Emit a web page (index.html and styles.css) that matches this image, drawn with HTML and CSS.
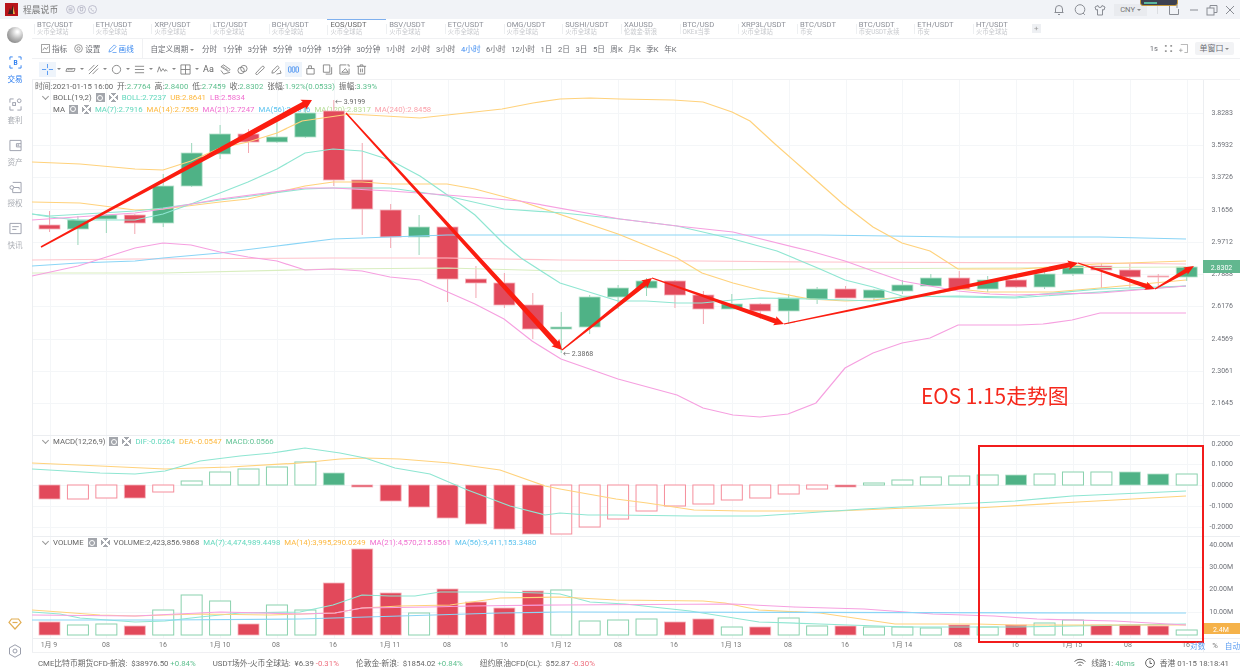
FILE: index.html
```html
<!DOCTYPE html>
<html lang="zh-CN">
<head>
  <meta charset="UTF-8">
  <title>程晨说币</title>
  <link rel="stylesheet" href="styles.css">
</head>
<body>
  <header class="titlebar">
    <div class="logo"><svg viewBox="0 0 13 13" width="13" height="13"><rect width="13" height="13" fill="#b8141a"/><path d="M3 11 5 5l1 3 2-6 1 9z" fill="#3a2320"/><path d="M8 3l2 8H8z" fill="#e8b04a"/></svg></div>
    <span class="app-name">程晨说币</span>
    <svg class="dot-icon" viewBox="0 0 9 9"><circle cx="4.5" cy="4.5" r="4"/><path d="M2.5 4.5h4M2.5 3h4M2.5 6h4"/></svg>
    <svg class="dot-icon" viewBox="0 0 9 9"><circle cx="4.5" cy="4.5" r="4"/><path d="M3 2.5h3L5.5 6h-2z"/></svg>
    <svg class="dot-icon" viewBox="0 0 9 9"><circle cx="4.5" cy="4.5" r="4"/><path d="M3 3c0 2 1 3 3 3"/></svg>
    <div class="window-tools">
      <svg class="win-icon" viewBox="0 0 12 12"><path d="M2.5 8.5V5a3.500 3.500 0 0 1 7 0v3.500zM1.500 8.500h9M5 10.500h2"/></svg>
      <svg class="win-icon search" viewBox="0 0 12 12"><circle cx="6" cy="5.500" r="4.800"/><path d="M9 9l1.800 1.800"/></svg>
      <svg class="win-icon shirt" viewBox="0 0 12 12"><path d="M4 1.500 1 3l1 3 1.500-.5V11h5V5.500L10 6l1-3-3-1.500a2 2 0 0 1-4 0z"/></svg>
      <div class="currency">CNY <i class="caret"></i></div>
      <i class="win-divider"></i>
      <svg class="win-icon" viewBox="0 0 12 12"><path d="M7 1.500H1.500v9h9V5"/><path d="M9 1v3"/></svg>
      <svg class="win-icon min" viewBox="0 0 12 12"><path d="M2 6h8"/></svg>
      <svg class="win-icon" viewBox="0 0 12 12"><rect x="1" y="4" width="7" height="7"/><path d="M4 4V1.500h7v7H8"/></svg>
      <svg class="win-icon" viewBox="0 0 12 12"><path d="M2 2l8 8M10 2l-8 8"/></svg>
    </div>
    <div class="thumb-popup"><i></i></div>
  </header>

  <div class="app">
    <nav class="sidebar">
      <div class="globe"></div>
      <a class="side-item active">
        <svg viewBox="0 0 14 14"><path d="M1 4V1h3M10 1h3v3M13 10v3h-3M4 13H1v-3"/><text x="7" y="10" class="side-b">B</text></svg>
        <span>交易</span>
      </a>
      <a class="side-item">
        <svg viewBox="0 0 14 14"><path d="M1 5V1h4M9 13h4V9M1 9v4h4"/><circle cx="11" cy="3" r="2"/><rect x="4" y="5" width="3" height="3"/></svg>
        <span>套利</span>
      </a>
      <a class="side-item">
        <svg viewBox="0 0 14 14"><path d="M1 1.500h12v11H1z"/><path d="M13 5H8v3.500h5"/><circle cx="10" cy="6.700" r=".6"/></svg>
        <span>资产</span>
      </a>
      <a class="side-item">
        <svg viewBox="0 0 14 14"><path d="M4 1.500h9v11H4V9"/><circle cx="3" cy="7" r="2"/><path d="M5 7h6v2"/></svg>
        <span>授权</span>
      </a>
      <a class="side-item">
        <svg viewBox="0 0 14 14"><path d="M1 1.500h12v11H1zM3.500 5h7M3.500 8h4.500"/></svg>
        <span>快讯</span>
      </a>
      <div class="side-bottom">
        <svg class="diamond" viewBox="0 0 14 14"><path d="M3.500 2h7L13 5.500 7 12 1 5.500z"/><path d="M4.500 5.500h5"/></svg>
        <svg class="hex" viewBox="0 0 14 14"><path d="M7 .8l5.500 3.100v6.200L7 13.200 1.500 10.100V3.900z"/><circle cx="7" cy="7" r="2"/></svg>
      </div>
    </nav>

    <main class="content">
      <div class="tabs">
        <div class="tab"><b>BTC/USDT</b><small>火币全球站</small></div>
        <div class="tab"><b>ETH/USDT</b><small>火币全球站</small></div>
        <div class="tab"><b>XRP/USDT</b><small>火币全球站</small></div>
        <div class="tab"><b>LTC/USDT</b><small>火币全球站</small></div>
        <div class="tab"><b>BCH/USDT</b><small>火币全球站</small></div>
        <div class="tab current"><b>EOS/USDT</b><small>火币全球站</small></div>
        <div class="tab"><b>BSV/USDT</b><small>火币全球站</small></div>
        <div class="tab"><b>ETC/USDT</b><small>火币全球站</small></div>
        <div class="tab"><b>OMG/USDT</b><small>火币全球站</small></div>
        <div class="tab"><b>SUSHI/USDT</b><small>火币全球站</small></div>
        <div class="tab"><b>XAUUSD</b><small>伦敦金-新浪</small></div>
        <div class="tab"><b>BTC/USD</b><small>OKEx当季</small></div>
        <div class="tab"><b>XRP3L/USDT</b><small>火币全球站</small></div>
        <div class="tab"><b>BTC/USDT</b><small>币安</small></div>
        <div class="tab"><b>BTC/USDT</b><small>币安USDT永续</small></div>
        <div class="tab"><b>ETH/USDT</b><small>币安</small></div>
        <div class="tab"><b>HT/USDT</b><small>火币全球站</small></div>
        <div class="tab-add">+</div>
      </div>

      <div class="periods">
        <span class="pbtn"><svg viewBox="0 0 10 10"><path d="M.5.500h9v9h-9zM2 7l2-3 2 2 2-3"/></svg>指标</span>
        <span class="pbtn"><svg viewBox="0 0 10 10"><circle cx="5" cy="5" r="4.300"/><circle cx="5" cy="5" r="1.800"/></svg>设置</span>
        <span class="pbtn on"><svg viewBox="0 0 10 10"><path d="M1 9l1-3 5-5 2 2-5 5zM5 9.500h4.500"/></svg>画线</span>
        <i class="pdivider"></i>
        <span class="custom">自定义周期 <i class="caret"></i></span>
        <span>分时</span><span>1分钟</span><span>3分钟</span><span>5分钟</span><span>10分钟</span><span>15分钟</span><span>30分钟</span>
        <span>1小时</span><span>2小时</span><span>3小时</span><span class="on">4小时</span><span>6小时</span><span>12小时</span>
        <span>1日</span><span>2日</span><span>3日</span><span>5日</span><span>周K</span><span>月K</span><span>季K</span><span>年K</span>
        <div class="period-right">
          <span>1s</span>
          <svg viewBox="0 0 10 10"><path d="M1 1h2v2H1zM7 1h2v2H7zM1 7h2v2H1zM7 7h2v2H7z" fill="#999" stroke="none"/></svg>
          <svg viewBox="0 0 10 10"><path d="M2 .5h7.500v9H6M0 7h4M2 5v4"/></svg>
          <span class="window-btn">单窗口 <i class="caret"></i></span>
        </div>
      </div>

      <div class="tools">
        <span class="tool sel"><svg viewBox="0 0 12 12"><path d="M6 0v4.500M6 7.500V12M0 6h4.500M7.500 6H12"/></svg></span><i class="caret tc"></i>
        <span class="tool"><svg viewBox="0 0 12 12"><path d="M1 8l1-3h9l-1 3zM3.500 5v1.500M5.500 5v1.500M7.500 5v1.500"/></svg></span><i class="caret tc"></i>
        <span class="tool"><svg viewBox="0 0 12 12"><path d="M1 7l6-6M5 11l6-6M1 11l10-10" /></svg></span><i class="caret tc"></i>
        <span class="tool"><svg viewBox="0 0 12 12"><circle cx="6" cy="6" r="4.500"/></svg></span><i class="caret tc"></i>
        <span class="tool"><svg viewBox="0 0 12 12"><path d="M1 2.500h10M1 6h10M1 9.500h10"/></svg></span><i class="caret tc"></i>
        <span class="tool"><svg viewBox="0 0 12 12"><path d="M.5 9l2-6 2 5 2-3 2 3 1-2 2 2"/></svg></span><i class="caret tc"></i>
        <span class="tool"><svg viewBox="0 0 12 12"><path d="M1 1h10v10H1zM6 1v10M1 6h10"/></svg></span><i class="caret tc"></i>
        <span class="tool aa">Aa</span>
        <span class="tool"><svg viewBox="0 0 12 12"><path d="M1 3l3-2 7 5-2 2zM1 7l3 4 7-2M3 3l2 1M6 5l2 1"/></svg></span>
        <span class="tool"><svg viewBox="0 0 12 12"><circle cx="4.500" cy="7" r="3.500"/><circle cx="7.500" cy="5" r="3.500"/></svg></span>
        <span class="tool"><svg viewBox="0 0 12 12"><path d="M2 10l7-7.500a1.500 1.500 0 0 1 2 2L4 11a1 1 0 0 1-2-1z"/></svg></span>
        <span class="tool"><svg viewBox="0 0 12 12"><path d="M1 10l.5-2.500L7 2l2 2-5.500 5.500zM6 11l5-1-1-3"/></svg></span>
        <span class="tool sel blue"><svg viewBox="0 0 12 12"><rect x=".5" y="3" width="2.800" height="6" rx="1"/><rect x="4.600" y="3" width="2.800" height="6" rx="1"/><rect x="8.700" y="3" width="2.800" height="6" rx="1"/></svg></span>
        <span class="tool"><svg viewBox="0 0 12 12"><path d="M2 5h8v6H2zM4 5V2h3v3"/></svg></span>
        <span class="tool"><svg viewBox="0 0 12 12"><path d="M1.500 1h7v8h-7zM10.500 3.500V11H4"/></svg></span>
        <span class="tool"><svg viewBox="0 0 12 12"><path d="M8 1H1v10h10V5M5 7l2-2 3 4H3zM9 1h2v2"/></svg></span>
        <span class="tool"><svg viewBox="0 0 12 12"><path d="M1 2.500h10M4.500 2.500V1h3v1.500M2.500 2.500V11h7V2.500M5 5v4M7 5v4"/></svg></span>
      </div>

      <div class="chart">
        <svg class="canvas" viewBox="32 79 1208 572" width="1208" height="572"><g id="grid"></g></svg>
        <section class="panel panel-main">
          <div class="info-row">
            时间:2021-01-15 16:00 &nbsp;开:<em class="up">2.7764</em> &nbsp;高:<em class="up">2.8400</em> &nbsp;低:<em class="up">2.7459</em> &nbsp;收:<em class="up">2.8302</em> &nbsp;张幅:<em class="up">1.92%(0.0533)</em> &nbsp;振幅:<em class="up">3.39%</em>
          </div>
          <div class="legend">
            <i class="chev"></i><span class="name">BOLL(19,2)</span><i class="mini gear"></i><i class="mini close"></i>
            <span class="c-teal">BOLL:2.7237</span><span class="c-orange">UB:2.8641</span><span class="c-pink">LB:2.5834</span>
          </div>
          <div class="legend">
            <i class="chev hide"></i><span class="name">MA</span><i class="mini gear"></i><i class="mini close"></i>
            <span class="c-teal">MA(7):2.7916</span><span class="c-orange">MA(14):2.7559</span><span class="c-pink">MA(21):2.7247</span><span class="c-blue">MA(56):2.9816</span><span class="c-lime">MA(120):2.8317</span><span class="c-rose">MA(240):2.8458</span>
          </div>
        </section>
        <section class="panel panel-macd">
          <div class="legend">
            <i class="chev"></i><span class="name">MACD(12,26,9)</span><i class="mini gear"></i><i class="mini close"></i>
            <span class="c-teal">DIF:-0.0264</span><span class="c-orange">DEA:-0.0547</span><span class="c-green">MACD:0.0566</span>
          </div>
        </section>
        <section class="panel panel-vol">
          <div class="legend">
            <i class="chev"></i><span class="name">VOLUME</span><i class="mini gear"></i><i class="mini close"></i>
            <span class="name">VOLUME:2,423,856.9868</span><span class="c-teal">MA(7):4,474,989.4498</span><span class="c-orange">MA(14):3,995,290.0249</span><span class="c-pink">MA(21):4,570,215.8561</span><span class="c-blue">MA(56):9,411,153.3480</span>
          </div>
        </section>
        <div class="axis-row">
          <span>对数</span><span class="pct">%</span><span>自动</span>
        </div>

        <svg class="canvas" viewBox="32 79 1208 572" width="1208" height="572">
          <g id="series"></g>
          <g class="price-axis">
            <text x="1233" y="114">3.8283</text><text x="1233" y="146">3.5932</text><text x="1233" y="178">3.3726</text>
            <text x="1233" y="211">3.1656</text><text x="1233" y="243">2.9712</text><text x="1233" y="275">2.7888</text>
            <text x="1233" y="307">2.6176</text><text x="1233" y="340">2.4569</text><text x="1233" y="372">2.3061</text>
            <text x="1233" y="404">2.1645</text>
            <text x="1233" y="445">0.2000</text><text x="1233" y="465">0.1000</text><text x="1233" y="486">0.0000</text>
            <text x="1233" y="507">-0.1000</text><text x="1233" y="528">-0.2000</text>
            <text x="1233" y="546">40.00M</text><text x="1233" y="568">30.00M</text><text x="1233" y="590">20.00M</text><text x="1233" y="613">10.00M</text>
          </g>
          <g class="time-axis">
            <text x="49" y="646">1月 9</text><text x="106" y="646">08</text><text x="163" y="646">16</text>
            <text x="220" y="646">1月 10</text><text x="276" y="646">08</text><text x="333" y="646">16</text>
            <text x="390" y="646">1月 11</text><text x="447" y="646">08</text><text x="504" y="646">16</text>
            <text x="561" y="646">1月 12</text><text x="618" y="646">08</text><text x="674" y="646">16</text>
            <text x="731" y="646">1月 13</text><text x="788" y="646">08</text><text x="845" y="646">16</text>
            <text x="902" y="646">1月 14</text><text x="958" y="646">08</text><text x="1015" y="646">16</text>
            <text x="1072" y="646">1月 15</text><text x="1128" y="646">08</text><text x="1186" y="646">16</text>
          </g>
          <text class="mark" x="335" y="102.500">← 3.9199</text>
          <text class="mark" x="563" y="355">← 2.3868</text>
          <rect class="tag-green" x="1203" y="259" width="37" height="13"/>
          <text class="tag-text" x="1221.500" y="268.500">2.8302</text>
          <rect class="tag-orange" x="1203" y="622" width="37" height="11"/>
          <text class="tag-text" x="1221" y="630.500">2.4M</text>
          <g id="arrows"></g>
          <text class="note" x="921" y="403">EOS 1.15走势图</text>
          <rect class="red-box" x="979" y="445" width="224" height="196"/>
        </svg>
      </div>

      <footer class="status">
        <span>CME比特币期货CFD-新浪: &nbsp;$38976.50 <em class="up">+0.84%</em></span>
        <span>USDT场外-火币全球站: &nbsp;¥6.39 <em class="down">-0.31%</em></span>
        <span>伦敦金-新浪: &nbsp;$1854.02 <em class="up">+0.84%</em></span>
        <span>纽约原油CFD(CL): &nbsp;$52.87 <em class="down">-0.30%</em></span>
        <div class="status-right">
          <svg viewBox="0 0 12 10"><path d="M.5 3.500a8 8 0 0 1 11 0M2.500 5.500a5 5 0 0 1 7 0M4.500 7.500a2.200 2.200 0 0 1 3 0"/></svg>
          <span>线路1: <em class="up">40ms</em></span>
          <svg class="clock" viewBox="0 0 10 10"><circle cx="5" cy="5" r="4.400"/><path d="M5 2.500V5.500h2"/></svg>
          <span>香港 01-15 18:18:41</span>
        </div>
      </footer>
    </main>
  </div>

  <script src="chart.js"></script>
</body>
</html>
```

FILE: styles.css
```css
/* General */
* {
  box-sizing: border-box;
}

body {
  margin: 0;
  width: 1240px;
  height: 671px;
  overflow: hidden;
  background: #fff;
  font-family: Roboto, "Noto Sans CJK SC", sans-serif;
  font-size: 7.6px;
  color: #666;
  filter: blur(0.4px);
}

em {
  font-style: normal;
}

.up { color: #5fc08f; }
.down { color: #ee6f7e; }

.caret {
  display: inline-block;
  border: 2px solid transparent;
  border-top: 2.500px solid #888;
  border-bottom: 0;
  vertical-align: middle;
}

/* Title bar */
.titlebar {
  position: relative;
  height: 19px;
  background: #f1f3f7;
  display: flex;
  align-items: center;
  padding-left: 5px;
}

.logo {
  width: 13px;
  height: 13px;
  margin-right: 5px;
}

.logo svg {
  display: block;
}

.app-name {
  font-size: 8.800px;
  color: #777;
  margin-right: 6px;
}

.dot-icon {
  width: 9px;
  height: 9px;
  margin-left: 2px;
  fill: none;
  stroke: #aab;
  stroke-width: 0.700;
}

.window-tools {
  margin-left: auto;
  display: flex;
  align-items: center;
  padding-right: 4px;
}

.win-icon {
  width: 12px;
  height: 12px;
  fill: none;
  stroke: #8a8d94;
  stroke-width: 1;
  margin-left: 6px;
}

.win-icon.search { margin-left: 9px; }
.win-icon.shirt { margin-left: 8px; }
.win-icon.min { margin-left: 8px; }

.currency {
  width: 33px;
  height: 12px;
  margin-left: 8px;
  background: #e9ebef;
  text-align: center;
  line-height: 12px;
  font-size: 7.600px;
  color: #777;
}

.win-divider {
  width: 1px;
  height: 9px;
  background: #dcdee2;
  margin: 0 4px 0 10px;
}

.thumb-popup {
  position: absolute;
  left: 1140px;
  top: -1px;
  width: 38px;
  height: 7px;
  background: #3d4150;
  border: 1px solid #c69a3c;
  border-radius: 0 0 3px 3px;
}

.thumb-popup i {
  display: block;
  width: 13px;
  height: 2px;
  margin: 2px 0 0 3px;
  background: #58b7a0;
}

/* Left nav */
.app {
  display: flex;
  height: 652px;
}

.sidebar {
  width: 32px;
  flex: none;
  display: flex;
  flex-direction: column;
  align-items: center;
  padding: 8px 2px 0 0;
}

.globe {
  width: 16px;
  height: 16px;
  border-radius: 50%;
  background: radial-gradient(circle at 65% 30%, #fff 5%, #bbb 45%, #8f8f8f 75%, #d0d0d0 100%);
  margin-bottom: 13px;
}

.side-item {
  height: 41.500px;
  display: flex;
  flex-direction: column;
  align-items: center;
  color: #a9acb3;
}

.side-item svg {
  width: 13px;
  height: 13px;
  fill: none;
  stroke: #9a9eab;
  stroke-width: 1;
  margin-bottom: 3.500px;
}

.side-item.active {
  color: #2f7ff0;
}

.side-item.active svg {
  stroke: #2f7ff0;
}

.side-b {
  font-size: 7px;
  font-weight: 700;
  text-anchor: middle;
  fill: #2f7ff0;
  stroke: none;
}

.side-bottom {
  margin-top: auto;
  padding-bottom: 13px;
  display: flex;
  flex-direction: column;
  align-items: center;
  gap: 13px;
}

.diamond {
  width: 14px;
  height: 14px;
  fill: none;
  stroke: #e2ae53;
  stroke-width: 1.200;
}

.hex {
  width: 14px;
  height: 14px;
  fill: none;
  stroke: #9a9eab;
  stroke-width: 1;
}

.content {
  flex: 1;
  min-width: 0;
}

/* Tabs */
.tabs {
  height: 20px;
  display: flex;
  padding-left: 2px;
  border-bottom: 1px solid #f0f1f3;
}

.tab {
  width: 58.700px;
  height: 19px;
  padding: 2px 0 0 3px;
  position: relative;
  flex: none;
}

.tab::before {
  content: "";
  position: absolute;
  left: 0;
  top: 5px;
  height: 10px;
  width: 1px;
  background: #eef0f2;
}

.tab.current {
  border-top: 1px solid #7fb0ee;
  padding-top: 1px;
}

.tab.current b { color: #666; }

.tab b {
  display: block;
  font-weight: 400;
  font-size: 7.600px;
  line-height: 8px;
  color: #8d9098;
}

.tab small {
  display: block;
  font-size: 6.300px;
  line-height: 7px;
  color: #c8cace;
}

.tab-add {
  width: 9px;
  height: 9px;
  margin: 5px 0 0 0;
  background: #eef0f3;
  color: #999;
  font-size: 8px;
  line-height: 9px;
  text-align: center;
}

/* Period bar */
.periods {
  height: 20px;
  display: flex;
  align-items: center;
  gap: 5.600px;
  padding-left: 9px;
  border-bottom: 1px solid #f0f1f3;
  color: #6d6f75;
  white-space: nowrap;
}

.periods .on {
  color: #3f8cf0;
}

.pbtn {
  display: flex;
  align-items: center;
  gap: 2px;
  margin-right: 1.500px;
}

.pbtn svg {
  width: 9px;
  height: 9px;
  fill: none;
  stroke: #777;
  stroke-width: 0.800;
}

.pbtn.on svg {
  stroke: #3f8cf0;
}

.pdivider {
  width: 1px;
  height: 19px;
  background: #f0f1f3;
  margin: 0 2px 0 1px;
}

.custom {
  margin-right: 2px;
}

.period-right {
  margin-left: auto;
  display: flex;
  align-items: center;
  gap: 6px;
  padding-right: 6px;
}

.period-right svg {
  width: 9px;
  height: 9px;
  fill: none;
  stroke: #999;
  stroke-width: 0.800;
}

.window-btn {
  width: 39px;
  height: 13px;
  margin-left: 1px;
  background: #f2f3f5;
  border-radius: 2px;
  line-height: 13px;
  text-align: center;
  font-size: 8px;
}

/* Drawing tools */
.tools {
  height: 21px;
  display: flex;
  align-items: center;
  padding-left: 7px;
  border-bottom: 1px solid #f0f1f3;
}

.tool {
  width: 17px;
  height: 15px;
  flex: none;
  display: flex;
  align-items: center;
  justify-content: center;
  color: #666;
  font-size: 9px;
}

.tool svg {
  width: 11px;
  height: 11px;
  fill: none;
  stroke: #777;
  stroke-width: 0.900;
}

.tool.sel {
  background: #eef4fb;
}

.tool.sel svg {
  stroke: #3f8cf0;
}

.tc {
  flex: none;
  margin: 0 1px;
}

/* Chart */
.chart {
  position: relative;
  height: 572px;
}

.panel {
  position: relative;
  padding-right: 37px;
}

.panel-main {
  height: 355px;
  padding-top: 1px;
}

.panel-macd {
  height: 101px;
  padding-top: 1px;
}

.panel-vol {
  height: 102px;
  padding-top: 1px;
}

.info-row {
  height: 11px;
  line-height: 11px;
  font-size: 7.800px;
  padding-left: 3px;
  white-space: nowrap;
}

.legend {
  height: 11.500px;
  display: flex;
  align-items: center;
  gap: 4px;
  font-size: 7.800px;
  padding-left: 9px;
  white-space: nowrap;
}

.chev {
  width: 8px;
  height: 8px;
  position: relative;
}

.chev::before {
  content: "";
  position: absolute;
  left: 1.500px;
  top: 0.500px;
  width: 4px;
  height: 4px;
  border: solid #999;
  border-width: 0 1px 1px 0;
  transform: rotate(45deg);
}

.chev.hide::before {
  display: none;
}

.name {
  color: #666;
}

.mini {
  width: 9px;
  height: 9px;
  position: relative;
  background: #a3a6ac;
}

.mini.gear::after {
  content: "";
  position: absolute;
  inset: 1.500px;
  border: 1.500px solid #fff;
  border-radius: 50%;
}

.mini.close {
  background:
    linear-gradient(45deg, transparent 42%, #fff 42%, #fff 58%, transparent 58%),
    linear-gradient(-45deg, transparent 42%, #fff 42%, #fff 58%, transparent 58%),
    #a3a6ac;
}

.c-teal { color: #63d8bd; }
.c-orange { color: #fdb83f; }
.c-pink { color: #f06fd0; }
.c-blue { color: #5cc3ef; }
.c-lime { color: #b5dd95; }
.c-rose { color: #fb9fa9; }
.c-green { color: #61c294; }

.axis-row {
  height: 14px;
  display: flex;
  justify-content: flex-end;
  align-items: center;
  gap: 7px;
  color: #5b9df2;
  position: relative;
  z-index: 2;
}

.axis-row .pct {
  color: #777;
}

.canvas {
  position: absolute;
  left: 0;
  top: 0;
  pointer-events: none;
}

.grid-line {
  stroke: #f4f6f8;
  stroke-width: 1;
}

.sep-line {
  stroke: #eceef1;
  stroke-width: 1;
}

.series-line {
  fill: none;
  stroke-width: 1.200;
}

.price-axis text {
  font-size: 7px;
  text-anchor: end;
  fill: #6e7178;
}

.time-axis text {
  font-size: 7px;
  text-anchor: middle;
  fill: #777;
}

.mark {
  font-size: 7px;
  fill: #666;
}

.tag-green { fill: #62b78f; }
.tag-orange { fill: #f5b24a; }

.tag-text {
  font-size: 7px;
  text-anchor: middle;
  fill: #fff;
}

.note {
  font-size: 20.800px;
  fill: #f5281c;
  font-family: "Noto Sans CJK SC", sans-serif;
}

.red-box {
  fill: none;
  stroke: #f21c1c;
  stroke-width: 2;
}

.arrow {
  fill: #fb1d10;
}

/* Status bar */
.status {
  height: 20px;
  display: flex;
  align-items: center;
  gap: 17px;
  padding-left: 6px;
  border-top: 1px solid #f0f1f3;
  font-size: 7.800px;
  white-space: nowrap;
}

.status-right {
  margin-left: auto;
  display: flex;
  align-items: center;
  gap: 5px;
  padding-right: 11px;
}

.status-right svg {
  width: 12px;
  height: 10px;
  fill: none;
  stroke: #666;
  stroke-width: 1;
}

.status-right .clock {
  width: 10px;
  margin-left: 5px;
}
```

FILE: chart.js
```js
const NS = "http://www.w3.org/2000/svg";
const firstX = 49.5;
const stepX = 28.43;
const barX = (i) => firstX + i * stepX;

// [body top, body bottom, wick top, wick bottom, colour]
const candles = [
  [224, 228, 210, 231, "r"], [219, 228, 215, 244, "g"], [214, 218, 213, 232, "g"], [214, 222, 213, 233, "r"],
  [185, 222, 173, 226, "g"], [152, 185, 142, 186, "g"], [133, 153, 124, 158, "g"], [133, 141, 128, 152, "r"],
  [136, 141, 120, 142, "g"], [112, 136, 105, 137, "g"], [110, 179, 99, 185, "r"], [179, 208, 142, 234, "r"],
  [209, 236, 203, 247, "r"], [226, 236, 214, 254, "g"], [226, 278, 223, 301, "r"], [278, 282, 265, 297, "r"],
  [282, 304, 272, 307, "r"], [304, 328, 292, 338, "r"], [326, 328, 311, 352, "g"], [296, 326, 294, 333, "g"],
  [287, 296, 284, 308, "g"], [280, 287, 277, 295, "g"], [280, 294, 279, 307, "r"], [294, 308, 290, 323, "r"],
  [303, 308, 293, 308, "g"], [303, 310, 302, 318, "r"], [297, 310, 293, 323, "g"], [288, 298, 286, 303, "g"],
  [288, 297, 285, 297, "r"], [289, 297, 288, 300, "g"], [284, 290, 279, 293, "g"], [277, 285, 273, 285, "g"],
  [277, 288, 270, 288, "r"], [279, 288, 275, 291, "g"], [279, 286, 276, 287, "r"], [273, 286, 271, 288, "g"],
  [265, 273, 261, 275, "g"], [265, 269, 262, 287, "r"], [269, 276, 263, 287, "r"], [275, 276, 273, 287, "r"],
  [266, 276, 266, 280, "g"]
];

// MACD bars hang from y=484: [top or bottom y, colour, filled]
const macd = [
  [498, "r", 1], [498, "r", 0], [497, "r", 0], [497, "r", 1], [491, "r", 0], [480, "g", 0], [471, "g", 0],
  [468, "g", 0], [466, "g", 0], [461, "g", 0], [472, "g", 1], [486, "r", 1], [500, "r", 1], [506, "r", 1],
  [517, "r", 1], [523, "r", 1], [528, "r", 1], [533, "r", 1], [533, "r", 0], [526, "r", 0], [518, "r", 0],
  [510, "r", 0], [505, "r", 0], [503, "r", 0], [499, "r", 0], [497, "r", 0], [493, "r", 0], [488, "r", 0],
  [486, "r", 1], [482, "g", 0], [479, "g", 0], [476, "g", 0], [475, "g", 0], [474, "g", 0], [474, "g", 1],
  [473, "g", 0], [471, "g", 0], [471, "g", 0], [471, "g", 1], [473, "g", 1], [473, "g", 0]
];

// Volume bars stand on y=634
const volume = [
  [621, "r", 1], [624, "g", 0], [623, "g", 0], [625, "r", 1], [609, "g", 0], [594, "g", 0], [600, "g", 0],
  [623, "r", 1], [604, "g", 0], [609, "g", 0], [582, "r", 1], [548, "r", 1], [592, "r", 1], [612, "g", 0],
  [588, "r", 1], [601, "r", 1], [607, "r", 1], [590, "r", 1], [589, "g", 0], [620, "g", 0], [619, "g", 0],
  [618, "g", 0], [621, "r", 1], [618, "r", 1], [626, "g", 0], [626, "r", 1], [617, "g", 0], [625, "g", 0],
  [625, "r", 1], [626, "g", 0], [626, "g", 0], [627, "g", 0], [624, "r", 1], [626, "g", 0], [624, "r", 1],
  [622, "g", 0], [619, "g", 0], [624, "r", 1], [624, "r", 1], [625, "r", 1], [629, "g", 0]
];

const teal = "#8fe6d2", yellow = "#ffd27c", pink = "#f6a0e0", blue = "#8ad5f6", rose = "#ffc3cb", lime = "#d9eec0";

const lines = [
  [lime, "32,272 163,272 333,268 447,267 560,270 700,269 820,268 1186,266"],
  [rose, "32,259 135,258 333,257 447,257 560,259 700,260 820,261 1100,262 1186,263"],
  [blue, "32,265 78,262 135,260 163,257 220,252 277,245 333,238 390,236 447,234 560,234 700,234 820,234 958,236 1100,236 1186,238"],
  [pink, "32,275 78,265 135,247 163,242 191,244 220,251 248,256 277,260 305,269 333,268 362,270 390,276 420,279 450,292 475,303 504,318 532,340 561,358 618,378 677,394 703,407 733,414 760,416 788,413 816,402 845,367 873,352 902,342 930,337 958,324 1020,324 1043,323 1072,319 1100,312 1186,312"],
  [yellow, "32,161 80,163 135,168 163,169 191,160 220,147 248,141 277,132 302,120 350,113 420,117 502,108 533,102 560,98 590,97 620,98 673,99 703,101 732,111 750,120 775,143 800,165 843,203 873,226 902,242 930,250 958,268 1020,268 1053,266 1097,263 1186,260"],
  [yellow, "32,201 80,202 135,209 163,208 220,201 248,198 305,185 333,181 362,181 390,183 420,183 447,183 475,188 520,200 618,233 677,257 702,272 733,282 760,289 810,298 845,300 873,299 902,296 930,294 958,288 987,291 1053,291 1100,287 1186,279"],
  [teal, "32,213 50,216 78,219 135,219 163,213 191,203 220,192 248,181 277,168 305,152 333,148 362,150 390,159 420,175 456,200 475,214 504,243 521,257 560,282 618,300 646,300 677,302 702,302 733,299 760,297 810,298 845,299 873,300 902,296 958,295 1015,296 1043,293 1100,288 1186,285"],
  [teal, "32,213 50,215 135,210 163,207 220,199 305,188 333,187 390,187 447,195 504,208 563,212 620,218 677,225 733,238 777,250 820,268 845,279 873,286 902,295 958,296 1015,297 1043,295 1186,285"],
  [pink, "32,219 135,212 163,208 220,198 305,187 333,187 390,190 447,194 520,200 620,218 677,225 733,231 810,250 845,260 873,270 902,280 958,290 990,293 1015,294 1100,292 1186,285"],
  [yellow, "32,462 100,465 165,468 230,466 300,462 340,458 365,457 400,458 450,462 500,469 545,485 560,488 616,498 647,502 694,509 742,510 790,510 837,510 907,507 976,507 1059,502 1115,499 1186,495"],
  [teal, "32,468 100,472 135,473 165,470 200,460 240,455 272,452 305,447 340,452 365,457 395,467 430,473 465,488 510,505 545,514 560,512 588,514 616,514 690,515 759,515 790,513 864,508 976,502 1015,500 1072,495 1186,490"],
  [teal, "32,611 60,613 80,617 135,621 165,620 200,616 240,612 300,611 333,604 362,594 390,595 415,595 440,591 500,591 540,592 560,593 590,601 625,603 690,610 759,621 820,623 907,626 1015,626 1186,623"],
  [yellow, "32,609 60,611 100,614 135,615 165,614 200,613 270,614 335,612 362,607 400,605 450,604 500,597 560,596 616,599 703,600 725,602 759,609 820,612 895,623 976,623 1015,624 1186,624"],
  [pink, "32,614 135,615 220,611 300,613 335,612 362,607 430,606 470,605 560,604 733,603 794,606 864,608 933,613 994,615 1037,618 1115,620 1186,624"],
  [blue, "32,619 100,619 165,619 300,618 400,615 500,612 560,611 1186,612"]
];

function add(parent, name, attrs) {
  const el = document.createElementNS(NS, name);
  for (const key in attrs) el.setAttribute(key, attrs[key]);
  parent.appendChild(el);
  return el;
}

function drawGrid(g) {
  const hLines = [112, 144, 176, 208, 241, 273, 305, 338, 370, 402, 463, 484, 505, 526, 566, 588, 611];
  hLines.forEach((y) => add(g, "line", { x1: 32, x2: 1203, y1: y + 0.5, y2: y + 0.5, class: "grid-line" }));
  for (let i = 0; i <= 40; i += 2) {
    const x = Math.round(barX(i)) + 0.5;
    add(g, "line", { x1: x, x2: x, y1: 79, y2: 637, class: "grid-line" });
  }
  [434, 535, 637, 651].forEach((y) => add(g, "line", { x1: 32, x2: 1240, y1: y + 0.5, y2: y + 0.5, class: "sep-line" }));
  add(g, "line", { x1: 32.5, x2: 32.5, y1: 79, y2: 651, class: "sep-line" });
  add(g, "line", { x1: 1203.5, x2: 1203.5, y1: 79, y2: 651, class: "sep-line" });
}

const palette = {
  r: { fill: "#e2495b", edge: "#f6b6bf", hollow: "#f58e9c", wick: "#f3a7b1" },
  g: { fill: "#4fb286", edge: "#b6e2cc", hollow: "#8ad2ae", wick: "#9ad6ba" }
};

function drawCandles(g) {
  candles.forEach((c, i) => {
    const x = barX(i), col = palette[c[4]];
    add(g, "rect", { x: x - 0.5, y: c[2], width: 1, height: c[3] - c[2], fill: col.wick });
    add(g, "rect", { x: x - 10.5, y: c[0], width: 21, height: Math.max(c[1] - c[0], 1), fill: col.fill, stroke: col.edge, "stroke-width": 0.8 });
  });
}

function drawBars(g, data, base) {
  data.forEach((b, i) => {
    const col = palette[b[1]];
    const top = Math.min(b[0], base), h = Math.abs(b[0] - base);
    add(g, "rect", {
      x: barX(i) - 10.5, y: top, width: 21, height: h,
      fill: b[2] ? col.fill : "#fff",
      stroke: b[2] ? col.edge : col.hollow,
      "stroke-width": b[2] ? 0.8 : 1
    });
  });
}

// Tapered arrow, thin at the start and thick near the head
function drawArrow(g, x1, y1, x2, y2, w0, w1) {
  const len = Math.hypot(x2 - x1, y2 - y1);
  const ux = (x2 - x1) / len, uy = (y2 - y1) / len;
  const nx = -uy, ny = ux;
  const neck = len - 9;
  const at = (along, side) => `${x1 + ux * along + nx * side},${y1 + uy * along + ny * side}`;
  const pts = [
    at(0, w0 / 2), at(neck, w1 / 2), at(neck - 1, w1 * 0.95), at(len, 0),
    at(neck - 1, -w1 * 0.95), at(neck, -w1 / 2), at(0, -w0 / 2)
  ];
  add(g, "polygon", { points: pts.join(" "), class: "arrow" });
}

drawGrid(document.getElementById("grid"));

const series = document.getElementById("series");
drawCandles(series);
drawBars(series, macd, 484);
drawBars(series, volume, 634);
lines.forEach((l) => add(series, "polyline", { points: l[1], stroke: l[0], class: "series-line" }));

const arrows = document.getElementById("arrows");
drawArrow(arrows, 41, 246, 312, 99, 1.5, 6);
drawArrow(arrows, 346, 112, 562, 349, 1.5, 5.5);
drawArrow(arrows, 562, 349, 652, 277, 1.2, 5);
drawArrow(arrows, 652, 277, 784, 323, 1.2, 5);
drawArrow(arrows, 784, 323, 1078, 262, 1.2, 5);
drawArrow(arrows, 1078, 262, 1155, 288, 1.2, 4.5);
drawArrow(arrows, 1155, 288, 1194, 265, 1.2, 4.5);
```
